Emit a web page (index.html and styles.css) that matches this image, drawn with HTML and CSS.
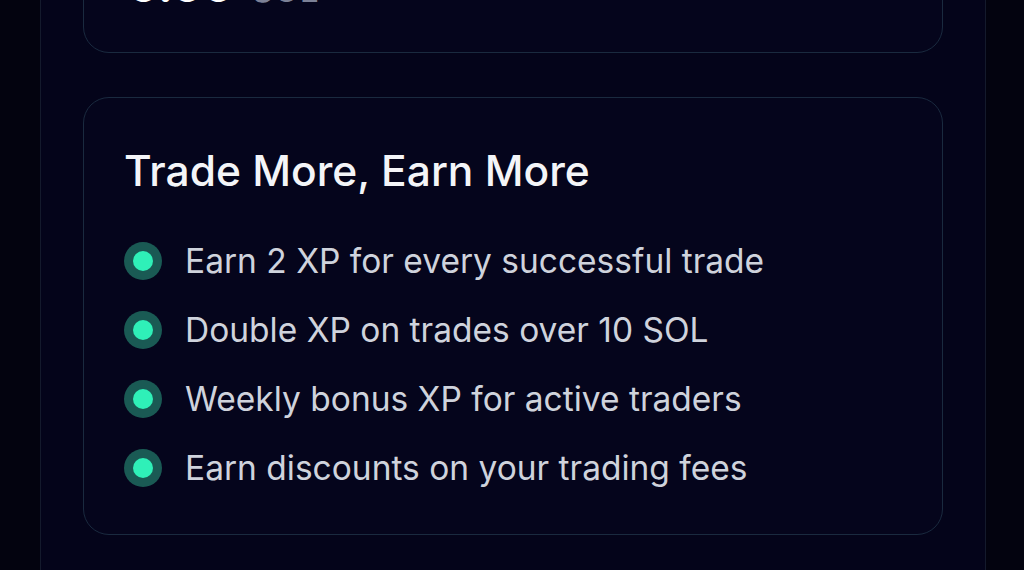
FILE: index.html
```html
<!DOCTYPE html>
<html lang="en">
<head>
<meta charset="utf-8">
<link rel="stylesheet" href="styles.css">
</head>
<body>
<div class="page">
  <main class="column">
    <section class="card balance-card">
      <div class="amount"><span class="value">0.00</span><span class="unit">SOL</span></div>
    </section>
    <section class="card perks-card">
      <h2 class="perks-title">Trade More, Earn More</h2>
      <ul class="perks">
        <li class="perk"><span class="dot"></span><span class="perk-text">Earn 2 XP for every successful trade</span></li>
        <li class="perk"><span class="dot"></span><span class="perk-text">Double XP on trades over 10 SOL</span></li>
        <li class="perk"><span class="dot"></span><span class="perk-text">Weekly bonus XP for active traders</span></li>
        <li class="perk"><span class="dot"></span><span class="perk-text">Earn discounts on your trading fees</span></li>
      </ul>
    </section>
  </main>
</div>
</body>
</html>
```
FILE: styles.css
```css
* { box-sizing: border-box; }
html, body {
  margin: 0;
  padding: 0;
  background: #03030f;
  height: 100%;
  overflow: hidden;
}
body {
  font-family: Inter, "Noto Sans", "Liberation Sans", sans-serif;
}
.page {
  display: flex;
  height: 100%;
}
.column {
  margin-left: 40px;
  width: 946px;
  border-left: 1px solid #141a2c;
  border-right: 1px solid #141a2c;
  background: #04041a;
  padding: 0 42px 0 42px;
  display: flex;
  flex-direction: column;
  gap: 44px;
}
.card {
  border: 1.5px solid #1a2a3f;
  border-radius: 26px;
  background: #05051c;
}
.balance-card {
  margin-top: -80px;
  height: 133px;
  padding: 0 44px;
  display: flex;
  align-items: flex-end;
  padding-bottom: 44px;
}
.amount {
  display: flex;
  align-items: baseline;
  gap: 18px;
  line-height: 1;
}
.value {
  color: #ffffff;
  font-weight: 700;
  font-size: 46px;
}
.unit {
  color: #7c8196;
  font-size: 34px;
}
.perks-card {
  height: 438px;
  padding: 45px 40px 0 40px;
}
.perks-title {
  margin: 0;
  color: #f4f5f8;
  font-weight: 500;
  font-size: 42.5px;
  line-height: 56px;
  letter-spacing: 0;
}
.perks {
  list-style: none;
  margin: 43px 0 0 0;
  padding: 0;
  display: flex;
  flex-direction: column;
  gap: 31px;
}
.perk {
  display: flex;
  align-items: center;
  gap: 23px;
  height: 38px;
}
.dot {
  width: 38px;
  height: 38px;
  border-radius: 50%;
  background: #1a5a54;
  display: flex;
  align-items: center;
  justify-content: center;
  flex: none;
}
.dot::after {
  content: "";
  width: 20px;
  height: 20px;
  border-radius: 50%;
  background: #2ff0b8;
}
.perk-text {
  color: #cfd3dc;
  font-size: 33.5px;
  line-height: 38px;
}
```
